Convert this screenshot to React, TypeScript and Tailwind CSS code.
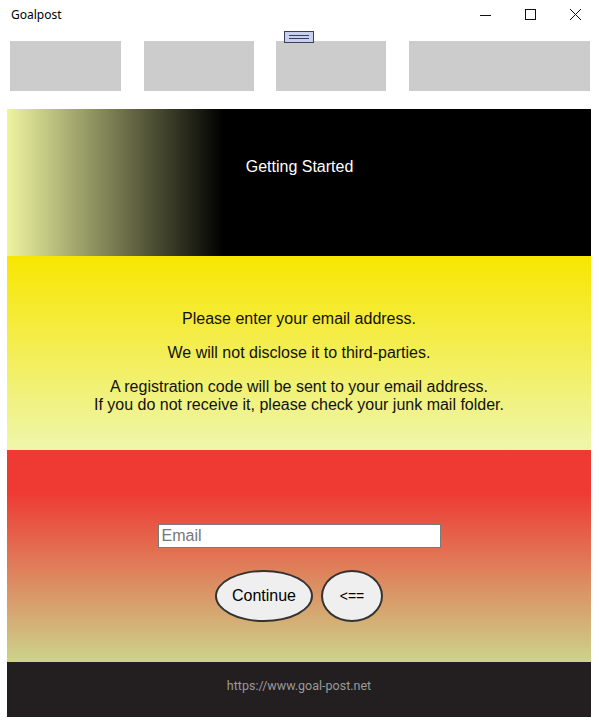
const tabs = ["w-[111px]", "w-[110px]", "w-[110px]", "w-[181px]"];

const Paragraph = ({ lines }: { lines: string[] }) => (
  <p className="leading-[18px]">
    {lines.map((l) => (
      <span key={l} className="block">
        {l}
      </span>
    ))}
  </p>
);

// window caption buttons, drawn flat like the Windows 10 title bar
const CaptionButtons = () => (
  <svg width="102" height="12" viewBox="0 0 102 12" fill="none" stroke="#111" strokeWidth="1" shapeRendering="crispEdges">
    <path d="M0 6.5h11" />
    <rect x="45.5" y="0.5" width="10" height="10" />
    <path d="M90 0l11 11M101 0L90 11" shapeRendering="geometricPrecision" />
  </svg>
);

export default function App() {
  return (
    <div className="relative w-[599px] h-[720px] bg-white overflow-hidden font-['Liberation_Sans',Arial,sans-serif]">
      {/* Title bar */}
      <div className="flex items-center justify-between h-[30px] pl-[11px] pr-[17px]">
        <span className="text-[12px] text-black font-['Noto_Sans',sans-serif]">Goalpost</span>
        <CaptionButtons />
      </div>

      {/* Drag handle */}
      <div className="absolute left-[284px] top-[31px] w-[30px] h-[12px] bg-[#c8d0f0] border border-[#3a3f5c] flex flex-col items-center justify-center gap-[2px] z-10">
        <div className="w-[20px] h-px bg-[#3a3f5c]" />
        <div className="w-[20px] h-px bg-[#3a3f5c]" />
      </div>

      {/* Tab strip */}
      <div className="flex gap-[22.5px] pl-[10px] pt-[11px]">
        {tabs.map((w, i) => (
          <div key={i} className={`${w} h-[50px] bg-[#cccccc]`} />
        ))}
      </div>

      <main className="mx-[7px] mt-[18px] w-[584px] text-[16px]">
        {/* Header */}
        <section className="h-[147px] bg-[linear-gradient(to_right,#eef4a0,#000_37%)] flex justify-center pt-[49px]">
          <h1 className="text-white leading-[18px] pl-[1px]">Getting Started</h1>
        </section>

        {/* Info */}
        <section className="h-[194px] bg-[linear-gradient(to_bottom,#f8e600,#eef6ac)] text-[#111] text-center pt-[54px] flex flex-col gap-[16px]">
          <Paragraph lines={["Please enter your email address."]} />
          <Paragraph lines={["We will not disclose it to third-parties."]} />
          <Paragraph
            lines={[
              "A registration code will be sent to your email address.",
              "If you do not receive it, please check your junk mail folder.",
            ]}
          />
        </section>

        {/* Form */}
        <section className="h-[212px] bg-[linear-gradient(to_bottom,#ee3a33_20%,#ccd48a)] flex flex-col items-center pt-[74px]">
          <input
            type="text"
            placeholder="Email"
            className="w-[283px] h-[24px] bg-white border border-[#7a7a7a] px-[3px] text-[16px] text-black placeholder:text-[#777] outline-none"
          />
          <div className="flex gap-[8px] mt-[22px]">
            <button className="w-[98px] h-[52px] rounded-[50%] bg-[#efefef] border-2 border-[#333] text-[16px] text-black">
              Continue
            </button>
            <button className="w-[62px] h-[52px] rounded-[50%] bg-[#efefef] border-2 border-[#333] text-[14px] text-black">
              &lt;==
            </button>
          </div>
        </section>

        {/* Footer */}
        <footer className="h-[55px] bg-[#231f20] flex justify-center pt-[16px]">
          <span className="text-[12.5px] leading-[15px] text-[#9a9a9a] font-['Roboto',sans-serif]">
            https://www.goal-post.net
          </span>
        </footer>
      </main>
    </div>
  );
}
